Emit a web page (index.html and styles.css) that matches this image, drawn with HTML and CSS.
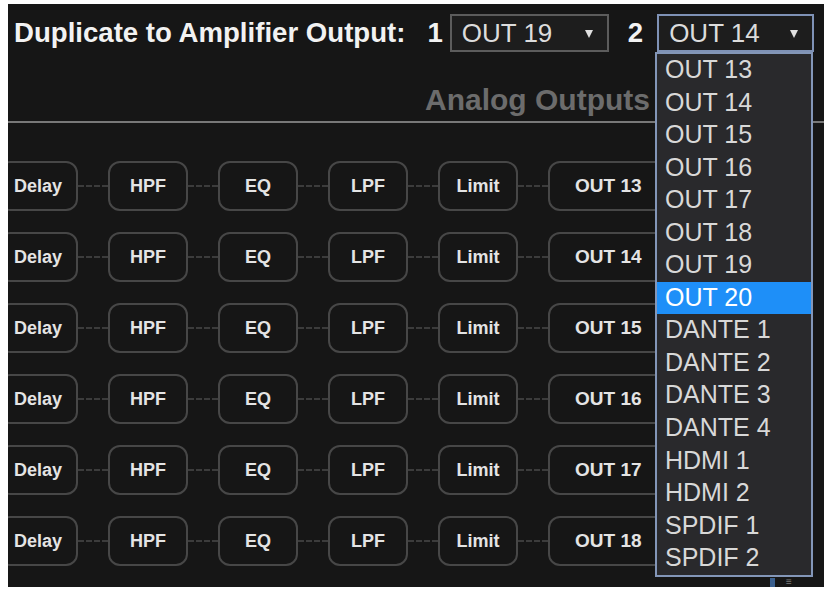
FILE: index.html
```html
<!DOCTYPE html>
<html>
<head>
<meta charset="utf-8">
<link rel="stylesheet" href="styles.css">
</head>
<body>
<div class="frame">
  <div class="header">
    <span class="label">Duplicate to Amplifier Output:</span>
    <span class="num num1">1</span>
    <div class="select select1"><span>OUT 19</span><span class="arrow"></span></div>
    <span class="num num2">2</span>
    <div class="select select2"><span>OUT 14</span><span class="arrow"></span></div>
  </div>
  <div class="section-title">Analog Outputs</div>
  <div class="rule"></div>
  <div class="rows">
    <div class="row"><div class="box">Delay</div><div class="wire"></div><div class="box">HPF</div><div class="wire"></div><div class="box">EQ</div><div class="wire"></div><div class="box">LPF</div><div class="wire"></div><div class="box">Limit</div><div class="wire"></div><div class="box out">OUT 13</div></div>
    <div class="row"><div class="box">Delay</div><div class="wire"></div><div class="box">HPF</div><div class="wire"></div><div class="box">EQ</div><div class="wire"></div><div class="box">LPF</div><div class="wire"></div><div class="box">Limit</div><div class="wire"></div><div class="box out">OUT 14</div></div>
    <div class="row"><div class="box">Delay</div><div class="wire"></div><div class="box">HPF</div><div class="wire"></div><div class="box">EQ</div><div class="wire"></div><div class="box">LPF</div><div class="wire"></div><div class="box">Limit</div><div class="wire"></div><div class="box out">OUT 15</div></div>
    <div class="row"><div class="box">Delay</div><div class="wire"></div><div class="box">HPF</div><div class="wire"></div><div class="box">EQ</div><div class="wire"></div><div class="box">LPF</div><div class="wire"></div><div class="box">Limit</div><div class="wire"></div><div class="box out">OUT 16</div></div>
    <div class="row"><div class="box">Delay</div><div class="wire"></div><div class="box">HPF</div><div class="wire"></div><div class="box">EQ</div><div class="wire"></div><div class="box">LPF</div><div class="wire"></div><div class="box">Limit</div><div class="wire"></div><div class="box out">OUT 17</div></div>
    <div class="row"><div class="box">Delay</div><div class="wire"></div><div class="box">HPF</div><div class="wire"></div><div class="box">EQ</div><div class="wire"></div><div class="box">LPF</div><div class="wire"></div><div class="box">Limit</div><div class="wire"></div><div class="box out">OUT 18</div></div>
  </div>
  <ul class="dropdown">
    <li>OUT 13</li>
    <li>OUT 14</li>
    <li>OUT 15</li>
    <li>OUT 16</li>
    <li>OUT 17</li>
    <li>OUT 18</li>
    <li>OUT 19</li>
    <li class="active">OUT 20</li>
    <li>DANTE 1</li>
    <li>DANTE 2</li>
    <li>DANTE 3</li>
    <li>DANTE 4</li>
    <li>HDMI 1</li>
    <li>HDMI 2</li>
    <li>SPDIF 1</li>
    <li>SPDIF 2</li>
  </ul>
  <span class="thumb"></span>
  <span class="grip">≡</span>
</div>
</body>
</html>
```

FILE: styles.css
```css
html, body {
  margin: 0;
  padding: 0;
  background: #ffffff;
}

.frame {
  position: relative;
  margin: 4px 0 0 8px;
  width: 816px;
  height: 583px;
  background: #161616;
  overflow: hidden;
  font-family: "Liberation Sans", Arial, sans-serif;
}

.header {
  display: flex;
  align-items: center;
  height: 38px;
  padding: 10px 0 0 6px;
}

.label {
  font-weight: bold;
  font-size: 27.6px;
  color: #f2f2f2;
  white-space: nowrap;
}

.num {
  font-weight: bold;
  font-size: 27.6px;
  color: #f2f2f2;
}

.num1 { margin-left: 22px; }
.num2 { margin-left: 19px; }

.select {
  box-sizing: border-box;
  height: 38px;
  display: flex;
  align-items: center;
  justify-content: space-between;
  padding: 0 14px 0 10px;
  background: #1d1d1d;
  color: #dcdcdc;
  font-size: 26px;
  white-space: nowrap;
}

.select1 {
  width: 159px;
  margin-left: 7px;
  border: 2px solid #5c5c5c;
}

.select2 {
  width: 157px;
  margin-left: 14px;
  border: 2px solid #7f92b6;
}

.arrow {
  width: 0;
  height: 0;
  border-left: 4.5px solid transparent;
  border-right: 4.5px solid transparent;
  border-top: 8px solid #e0e0e0;
  margin-top: 1px;
}

.section-title {
  margin-top: 33px;
  height: 30px;
  line-height: 30px;
  padding-left: 417px;
  font-size: 30px;
  font-weight: bold;
  color: #6c6c6c;
  white-space: nowrap;
}

.rule {
  margin-top: 6px;
  height: 2px;
  background: #787878;
}

.rows {
  display: flex;
  flex-direction: column;
  gap: 21px;
  padding-top: 38px;
  margin-left: -10px;
}

.row {
  display: flex;
  align-items: center;
}

.box {
  box-sizing: border-box;
  flex: none;
  width: 80px;
  height: 50px;
  border: 2px solid #474747;
  border-radius: 12px;
  display: flex;
  align-items: center;
  justify-content: center;
  color: #e4e4e4;
  font-size: 18px;
  font-weight: bold;
  white-space: nowrap;
}

.box.out {
  width: 120px;
  justify-content: flex-start;
  padding-left: 25px;
  font-size: 19px;
}

.wire {
  flex: none;
  width: 30px;
  border-top: 2px dashed #3c3c3c;
}

.dropdown {
  position: absolute;
  left: 647px;
  top: 48px;
  width: 158px;
  box-sizing: border-box;
  margin: 0;
  padding: 0;
  list-style: none;
  background: #29292c;
  border: 2px solid #8396b8;
}

.dropdown li {
  height: 32.56px;
  line-height: 31px;
  padding-left: 8px;
  font-size: 25px;
  color: #d8d8d8;
  white-space: nowrap;
}

.dropdown li.active {
  background: #1e8ff8;
  color: #ffffff;
}

.thumb {
  position: absolute;
  left: 762px;
  top: 574px;
  width: 5px;
  height: 9px;
  background: #3a5f8e;
}

.grip {
  position: absolute;
  left: 778px;
  top: 572px;
  font-size: 10px;
  color: #7a7a7a;
}
```
